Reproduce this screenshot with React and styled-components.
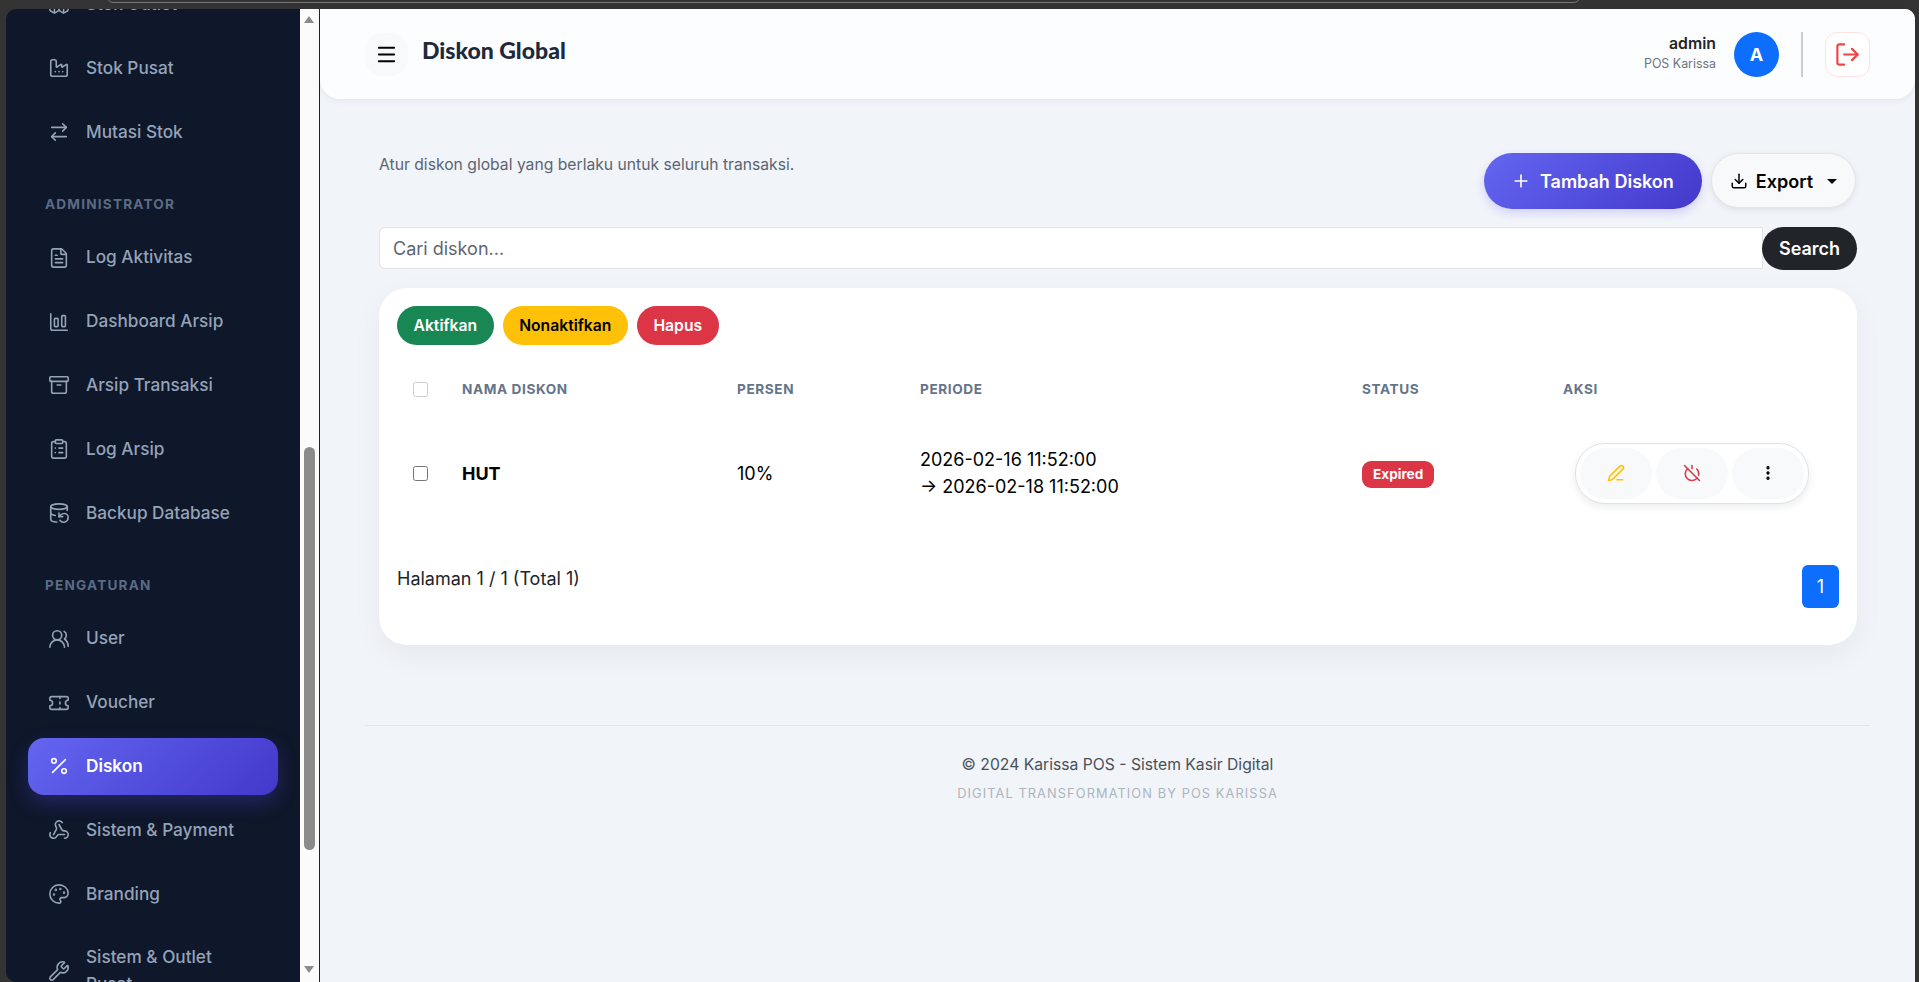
import styled, { createGlobalStyle } from 'styled-components';
import {
  Archive,
  ArrowRightLeft,
  Boxes,
  ChartColumnBig,
  ClipboardList,
  DatabaseBackup,
  Download,
  EllipsisVertical,
  Factory,
  FileText,
  LogOut,
  Menu,
  Palette,
  PenLine,
  Percent,
  Plus,
  PowerOff,
  Ticket,
  UsersRound,
  Webhook,
  Wrench,
} from 'lucide-react';

const GlobalStyle = createGlobalStyle`
  * { box-sizing: border-box; }
  html, body { margin: 0; height: 100%; overflow: hidden; }
  body {
    background: #333;
    font-family: Inter, "Liberation Sans", sans-serif;
    color: #000;
  }
`;

const menu = [
  { items: [{ label: 'Stok Outlet', icon: Boxes }, { label: 'Stok Pusat', icon: Factory }, { label: 'Mutasi Stok', icon: ArrowRightLeft }] },
  {
    title: 'ADMINISTRATOR',
    items: [
      { label: 'Log Aktivitas', icon: FileText },
      { label: 'Dashboard Arsip', icon: ChartColumnBig },
      { label: 'Arsip Transaksi', icon: Archive },
      { label: 'Log Arsip', icon: ClipboardList },
      { label: 'Backup Database', icon: DatabaseBackup },
    ],
  },
  {
    title: 'PENGATURAN',
    items: [
      { label: 'User', icon: UsersRound },
      { label: 'Voucher', icon: Ticket },
      { label: 'Diskon', icon: Percent, active: true },
      { label: 'Sistem & Payment', icon: Webhook },
      { label: 'Branding', icon: Palette },
      { label: 'Sistem & Outlet Pusat', icon: Wrench },
    ],
  },
];

export default function App() {
  return (
    <>
      <GlobalStyle />
      <Window>
        <BehindWindow />
        <Sidebar>
          <SideNav>
            {menu.map((group, i) => (
              <NavGroup key={i}>
                {group.title && <NavTitle>{group.title}</NavTitle>}
                {group.items.map((item) => (
                  <NavItem key={item.label} $active={item.active}>
                    <item.icon size={22} strokeWidth={1.75} />
                    <span>{item.label}</span>
                  </NavItem>
                ))}
              </NavGroup>
            ))}
          </SideNav>
        </Sidebar>

        <ScrollTrack>
          <ArrowUp />
          <ScrollThumb />
          <ArrowDown />
        </ScrollTrack>

        <Main>
          <TopBar>
            <TopLeft>
              <MenuButton>
                <Menu size={23} strokeWidth={2} />
              </MenuButton>
              <PageTitle>Diskon Global</PageTitle>
            </TopLeft>
            <TopRight>
              <UserInfo>
                <UserName>admin</UserName>
                <UserRole>POS Karissa</UserRole>
              </UserInfo>
              <Avatar>A</Avatar>
              <TopDivider />
              <LogoutButton>
                <LogOut size={27} strokeWidth={1.9} />
              </LogoutButton>
            </TopRight>
          </TopBar>

          <Content>
            <HeadRow>
              <Subtitle>Atur diskon global yang berlaku untuk seluruh transaksi.</Subtitle>
              <HeadActions>
                <PrimaryButton>
                  <Plus size={20} strokeWidth={2} />
                  Tambah Diskon
                </PrimaryButton>
                <ExportButton>
                  <Download size={18} strokeWidth={2} />
                  Export
                  <Caret />
                </ExportButton>
              </HeadActions>
            </HeadRow>

            <SearchRow>
              <SearchInput placeholder="Cari diskon..." />
              <SearchButton>Search</SearchButton>
            </SearchRow>

            <Card>
              <BulkRow>
                <BulkButton $bg="#198754" $color="#fff">Aktifkan</BulkButton>
                <BulkButton $bg="#ffc107" $color="#000">Nonaktifkan</BulkButton>
                <BulkButton $bg="#dc3545" $color="#fff">Hapus</BulkButton>
              </BulkRow>

              <Table>
                <thead>
                  <tr>
                    <Th $w={49}><HeadCheck type="checkbox" /></Th>
                    <Th $w={275}>NAMA DISKON</Th>
                    <Th $w={183}>PERSEN</Th>
                    <Th $w={442}>PERIODE</Th>
                    <Th $w={201}>STATUS</Th>
                    <Th>AKSI</Th>
                  </tr>
                </thead>
                <tbody>
                  <tr>
                    <Td><RowCheck type="checkbox" /></Td>
                    <NameCell>HUT</NameCell>
                    <Td>10%</Td>
                    <Td>
                      2026-02-16 11:52:00
                      <br />→ 2026-02-18 11:52:00
                    </Td>
                    <Td><StatusBadge>Expired</StatusBadge></Td>
                    <Td>
                      <ActionGroup>
                        <ActionButton $color="#ffc107"><PenLine size={18} strokeWidth={2} /></ActionButton>
                        <ActionButton $color="#dc3545"><PowerOff size={18} strokeWidth={2} /></ActionButton>
                        <ActionButton $color="#000"><EllipsisVertical size={18} strokeWidth={2.4} /></ActionButton>
                      </ActionGroup>
                    </Td>
                  </tr>
                </tbody>
              </Table>

              <PagerRow>
                <PagerText>Halaman 1 / 1 (Total 1)</PagerText>
                <PageButton>1</PageButton>
              </PagerRow>
            </Card>

            <Footer>
              <FooterMain>© 2024 Karissa POS - Sistem Kasir Digital</FooterMain>
              <FooterSub>DIGITAL TRANSFORMATION BY POS KARISSA</FooterSub>
            </Footer>
          </Content>
        </Main>
      </Window>
    </>
  );
}

const Window = styled.div`
  position: relative;
  display: flex;
  height: 100vh;
  padding: 9px 4px 0 6px;
  background: #333;
`;

// edge of another desktop window showing above this one
const BehindWindow = styled.div`
  position: absolute;
  top: -4px;
  left: 107px;
  width: 1473px;
  height: 7px;
  border: 1px solid #777;
  border-radius: 0 0 6px 6px;
`;

const Sidebar = styled.aside`
  width: 294px;
  flex: none;
  overflow: hidden;
  background: #0f172a;
  border-top-left-radius: 10px;
  border-bottom-left-radius: 10px;
`;

const SideNav = styled.nav`
  margin-top: -33px;
  padding: 0 22px;
  display: flex;
  flex-direction: column;
`;

const NavGroup = styled.div`
  display: flex;
  flex-direction: column;
  gap: 7px;
  margin-bottom: 34px;
`;

const NavTitle = styled.div`
  padding: 0 17px;
  margin-bottom: 8px;
  font-size: 13.6px;
  font-weight: 700;
  letter-spacing: 1.2px;
  line-height: 20px;
  color: #5b6b85;
`;

const NavItem = styled.a`
  display: flex;
  align-items: center;
  gap: 16px;
  padding: 15px 20px;
  border-radius: 16px;
  font-size: 17.2px;
  line-height: 26.8px;
  font-weight: ${({ $active }) => ($active ? 600 : 500)};
  color: ${({ $active }) => ($active ? '#fff' : '#94a3b8')};
  background: ${({ $active }) => ($active ? 'linear-gradient(135deg, #6366f1, #4338ca)' : 'transparent')};
  box-shadow: ${({ $active }) => ($active ? '0 8px 20px rgba(79, 70, 229, 0.3)' : 'none')};

  svg {
    flex: none;
  }
`;

const ScrollTrack = styled.div`
  width: 20px;
  flex: none;
  display: flex;
  flex-direction: column;
  align-items: center;
  padding-right: 1px;
  background: #fbfbfb;
  border-right: 1px solid #1c2233;
`;

const ArrowUp = styled.div`
  margin-top: 7px;
  width: 0;
  height: 0;
  border-left: 5px solid transparent;
  border-right: 5px solid transparent;
  border-bottom: 7px solid #8b8b8b;
`;

const ScrollThumb = styled.div`
  margin-top: 424px;
  width: 11px;
  height: 403px;
  border-radius: 6px;
  background: #8b8b8b;
`;

const ArrowDown = styled.div`
  margin-top: 116px;
  width: 0;
  height: 0;
  border-left: 5px solid transparent;
  border-right: 5px solid transparent;
  border-top: 7px solid #8b8b8b;
`;

const Main = styled.main`
  flex: 1;
  min-width: 0;
  background: #f1f4f9;
  border-top-right-radius: 10px;
`;

const TopBar = styled.header`
  display: flex;
  align-items: center;
  justify-content: space-between;
  height: 90px;
  padding: 0 45px;
  background: #fcfdff;
  border-radius: 0 0 20px 20px;
  border-top-right-radius: 10px;
  box-shadow: 0 2px 6px rgba(15, 23, 42, 0.06);
`;

const TopLeft = styled.div`
  display: flex;
  align-items: center;
  gap: 14px;
`;

const MenuButton = styled.button`
  display: flex;
  align-items: center;
  justify-content: center;
  width: 43px;
  height: 43px;
  padding: 0;
  border: 0;
  border-radius: 18px;
  background: #f8f9fa;
  color: #000;
`;

const PageTitle = styled.h1`
  margin: 0 0 9px;
  font-family: Lato, "Liberation Sans", sans-serif;
  font-size: 23px;
  font-weight: 900;
  color: #1e293b;
`;

const TopRight = styled.div`
  display: flex;
  align-items: center;
`;

const UserInfo = styled.div`
  text-align: right;
  margin-right: 18px;
`;

const UserName = styled.div`
  font-size: 15.8px;
  line-height: 18px;
  font-weight: 600;
  color: #212529;
`;

const UserRole = styled.div`
  font-size: 12.4px;
  line-height: 21px;
  color: #6c757d;
`;

const Avatar = styled.div`
  display: flex;
  align-items: center;
  justify-content: center;
  width: 45px;
  height: 45px;
  border-radius: 50%;
  background: #0d6efd;
  color: #fff;
  font-size: 18px;
  font-weight: 700;
`;

const TopDivider = styled.div`
  width: 2px;
  height: 45px;
  margin: 0 22px;
  background: #c9ccd1;
`;

const LogoutButton = styled.button`
  display: flex;
  align-items: center;
  justify-content: center;
  width: 45px;
  height: 45px;
  padding: 0;
  border: 1px solid #fde2e2;
  border-radius: 12px;
  background: #fff;
  color: #ef4444;
`;

const Content = styled.div`
  padding: 0 45px;
`;

const HeadRow = styled.div`
  display: flex;
  justify-content: space-between;
  padding: 54px 14px 0;
`;

const Subtitle = styled.p`
  margin: 1px 0 0;
  font-size: 15.7px;
  line-height: 22px;
  color: #5b6472;
`;

const HeadActions = styled.div`
  display: flex;
  gap: 9px;
`;

const PrimaryButton = styled.button`
  display: flex;
  align-items: center;
  gap: 9px;
  height: 56px;
  padding: 0 28px 0 27px;
  border: 0;
  border-radius: 28px;
  background: linear-gradient(135deg, #6366f1, #4338ca);
  box-shadow: 0 4px 10px rgba(79, 70, 229, 0.2);
  color: #fff;
  font: 600 18px Inter, sans-serif;
`;

const ExportButton = styled.button`
  display: flex;
  align-items: center;
  gap: 8px;
  height: 55px;
  padding: 1px 18px 0 18px;
  border: 1px solid #e2e5ea;
  border-radius: 28px;
  background: #f8f9fa;
  box-shadow: 0 2px 6px rgba(15, 23, 42, 0.08);
  color: #000;
  font: 600 18px Inter, sans-serif;
`;

const Caret = styled.span`
  margin-left: 6px;
  width: 0;
  height: 0;
  border-left: 5px solid transparent;
  border-right: 5px solid transparent;
  border-top: 5px solid #000;
`;

const SearchRow = styled.div`
  display: flex;
  padding: 18px 13px 0 14px;
`;

const SearchInput = styled.input`
  flex: 1;
  min-width: 0;
  height: 42px;
  padding: 0 13px;
  border: 1px solid #dee2e6;
  border-radius: 6px 0 0 6px;
  background: #fff;
  font: 400 18px Inter, sans-serif;
  outline: none;

  &::placeholder {
    color: #5f6670;
    opacity: 1;
  }
`;

const SearchButton = styled.button`
  width: 95px;
  height: 43px;
  margin-left: -1px;
  border: 0;
  border-radius: 22px;
  background: #212529;
  color: #fff;
  font: 600 18px Inter, sans-serif;
`;

const Card = styled.section`
  margin: 18px 13px 0 14px;
  height: 357px;
  padding: 18px;
  border-radius: 28px;
  background: #fff;
  box-shadow: 0 10px 30px rgba(15, 23, 42, 0.05);
`;

const BulkRow = styled.div`
  display: flex;
  gap: 9px;
`;

const BulkButton = styled.button`
  height: 39px;
  padding: 0 16.5px;
  border: 0;
  border-radius: 20px;
  background: ${({ $bg }) => $bg};
  color: ${({ $color }) => $color};
  font: 600 15.7px Inter, sans-serif;
`;

const Table = styled.table`
  width: 100%;
  margin-top: 18px;
  border-collapse: collapse;
  table-layout: fixed;
`;

const Th = styled.th`
  ${({ $w }) => ($w ? `width: ${$w}px;` : '')}
  height: 54px;
  padding: 0 0 2px 16px;
  text-align: left;
  font-size: 13.6px;
  font-weight: 700;
  letter-spacing: 0.6px;
  color: #64748b;
`;

const Td = styled.td`
  height: 112px;
  padding: 0 0 0 16px;
  font-size: 18px;
  line-height: 27px;
  vertical-align: middle;
`;

const NameCell = styled(Td)`
  font-weight: 700;
`;

const HeadCheck = styled.input`
  display: block;
  width: 15px;
  height: 15px;
  margin: 0;
  opacity: 0.35;
`;

const RowCheck = styled.input`
  display: block;
  width: 15px;
  height: 15px;
  margin: 0;
`;

const StatusBadge = styled.span`
  display: inline-flex;
  align-items: center;
  height: 27px;
  padding: 0 11px;
  border-radius: 9px;
  background: #dc3545;
  color: #fff;
  font-size: 13.6px;
  font-weight: 700;
`;

const ActionGroup = styled.div`
  display: inline-flex;
  gap: 4px;
  margin-left: 12px;
  padding: 4px;
  border: 1px solid #dee2e6;
  border-radius: 30px;
  background: #fff;
  box-shadow: 0 3px 8px rgba(15, 23, 42, 0.08);
`;

const ActionButton = styled.button`
  display: flex;
  align-items: center;
  justify-content: center;
  width: 72px;
  height: 51px;
  padding: 0;
  border: 0;
  border-radius: 26px;
  background: #f8f9fa;
  color: ${({ $color }) => $color};
`;

const PagerRow = styled.div`
  display: flex;
  justify-content: space-between;
  align-items: flex-start;
  margin-top: 36px;
`;

const PagerText = styled.div`
  font-size: 18px;
  line-height: 27px;
  color: #212529;
`;

const PageButton = styled.button`
  width: 37px;
  height: 43px;
  padding: 0;
  border: 0;
  border-radius: 6px;
  background: #0d6efd;
  color: #fff;
  font: 400 18px Inter, sans-serif;
`;

const Footer = styled.footer`
  margin-top: 80px;
  padding-top: 27px;
  border-top: 1px solid #e2e5ea;
  text-align: center;
`;

const FooterMain = styled.div`
  font-size: 15.7px;
  line-height: 24px;
  color: #495057;
`;

const FooterSub = styled.div`
  margin-top: 8px;
  font-size: 12.8px;
  line-height: 18px;
  letter-spacing: 1.1px;
  color: #adb5bd;
`;
